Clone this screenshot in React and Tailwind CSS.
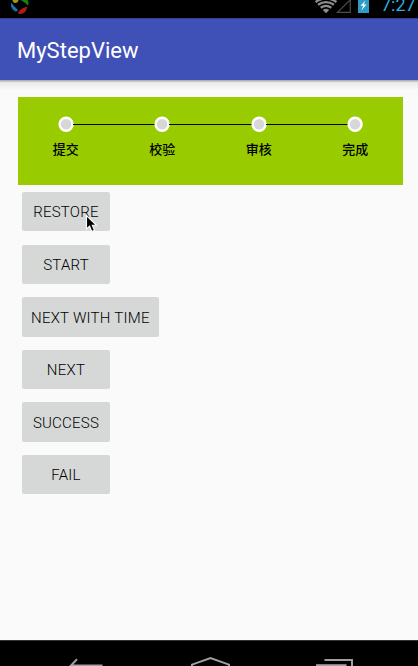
const steps = ["提交", "校验", "审核", "完成"];
const actions = ["RESTORE", "START", "NEXT WITH TIME", "NEXT", "SUCCESS", "FAIL"];

function StatusBar() {
  return (
    <header className="flex h-[18px] shrink-0 items-start overflow-hidden bg-black">
      <svg className="ml-[10px] h-[15px] w-[20px] shrink-0" viewBox="0 0 20 15">
        <path d="M2.5 0H8.5Q8 3 5 3Q3 3 2.5 0Z" fill="#a79a12" />
        <path d="M10.5 0H17.5Q19.5 3 17.8 5.5Q16 3 10.5 0Z" fill="#138012" />
        <path d="M1.2 2.5Q4 6.5 8 10Q7 12 5.5 11.5Q0 9 1.2 2.5Z" fill="#1676a8" />
        <path d="M17.3 7Q12 7 8 12.5Q8 14 11 14Q16 13 17.3 7Z" fill="#a91c19" />
      </svg>
      <div className="flex-1" />
      <svg className="h-[14px] w-[56px] shrink-0" viewBox="0 0 56 14">
        <g fill="none" stroke="#8e8e8e" strokeWidth="2.3">
          <path d="M0.5 2Q11 -5 21.5 2M3 4.8Q11 -0.4 19 4.8M5.7 7.7Q11 4 16.3 7.7" />
        </g>
        <path d="M7.8 10Q11 7.4 14.2 10L11 13.2Z" fill="#8e8e8e" />
        <path d="M36 -1L22.5 12.4H35.3V-1" fill="none" stroke="#4c4c4c" strokeWidth="1.2" />
        <path d="M43 0H54V13H43Z" fill="#2f9bc4" />
        <path d="M50.5 0.5L45.5 5.8H48.3L46.3 10.5L51.5 4.6H48.7Z" fill="#fff" />
      </svg>
      <span className="-mt-[5px] ml-[10px] w-[37px] whitespace-nowrap text-[18px] leading-[20px] text-[#2badde]">
        7:27
      </span>
    </header>
  );
}

function StepView() {
  return (
    <section className="mt-[17px] ml-[17.5px] grid h-[88px] w-[385.9px] grid-cols-4 bg-[#99cc00]">
      {steps.map((label, i) => (
        <div key={label} className="flex flex-col items-center pt-[19px]">
          <div className="flex h-[16px] w-full items-center">
            <div className={i === 0 ? "h-px flex-1" : "h-px flex-1 bg-black"} />
            <svg className="-mx-px h-[16px] w-[16px] shrink-0" viewBox="0 0 16 16">
              <circle cx="8.1" cy="8.3" r="6.5" fill="#d6d8d7" stroke="#fff" strokeWidth="2.4" />
            </svg>
            <div className={i === steps.length - 1 ? "h-px flex-1" : "h-px flex-1 bg-black"} />
          </div>
          <span className="mt-[7px] font-['Noto_Sans_CJK_SC',sans-serif] text-[13px] leading-[20px] font-medium text-black">
            {label}
          </span>
        </div>
      ))}
    </section>
  );
}

function NavigationBar() {
  return (
    <footer className="h-[26px] shrink-0 border-t border-[#303432] bg-black">
      <svg className="block h-[25px] w-full" viewBox="0 641 418 25" fill="none" stroke="#a0a0a0">
        <path d="M102.5 665.5H71L77 659.3" strokeWidth="2" />
        <path d="M192 666V664.6L210.5 658L229 664.6V666" strokeWidth="2" />
        <path d="M324.5 660H352V666" strokeWidth="2" />
        <path d="M316 665.2H346.5" strokeWidth="2" />
      </svg>
    </footer>
  );
}

export default function App() {
  return (
    <div className="relative flex h-[666px] w-[418px] flex-col overflow-hidden bg-[#fafafa] font-[Roboto,sans-serif]">
      <StatusBar />
      <div className="flex h-[62px] shrink-0 items-center border-t border-[#303f8f] bg-[#3f50b7] pt-[2px] pl-[17px]">
        <h1 className="text-[22px] leading-[28px] text-white">MyStepView</h1>
      </div>
      <main className="flex min-h-0 flex-1 flex-col">
        <div className="-mb-[9px] h-[9px] shrink-0 bg-linear-to-b from-[#b0b0b0] from-10% via-[#e8e8e8] via-25% to-[#f7f7f7]" />
        <StepView />
        <div className="mt-[7px] ml-[22px] flex flex-col items-start gap-[13.2px]">
          {actions.map((label) => (
            <button
              key={label}
              className="h-[39.4px] min-w-[88px] rounded-[2px] bg-[#d6d8d7] px-[9px] pt-[1.5px] text-[15px] leading-[20px] font-light tracking-[0.24px] whitespace-nowrap text-black"
            >
              {label}
            </button>
          ))}
        </div>
      </main>
      <NavigationBar />
      <svg className="absolute top-[214px] left-[85px] h-[20px] w-[14px]" viewBox="0 0 14 20">
        <path d="M1.5 1.5V15L4.6 12.2L6.8 17.4L9.5 16.2L7.3 11.3H11.5Z" fill="#000" stroke="#fff" strokeWidth="1.1" />
      </svg>
    </div>
  );
}
